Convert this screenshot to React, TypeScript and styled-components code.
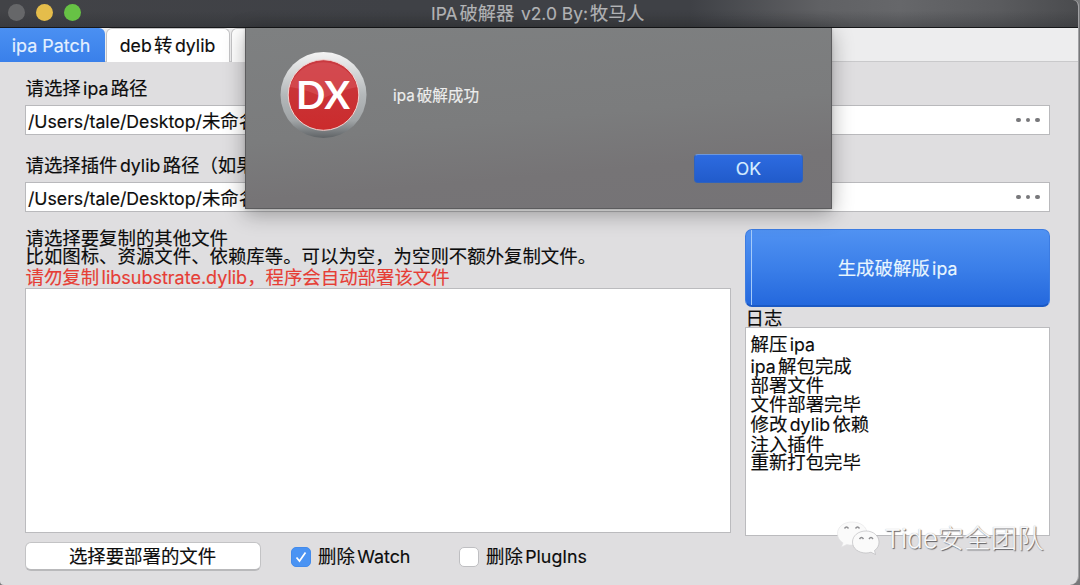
import React from 'react';
import styled, { createGlobalStyle } from 'styled-components';

const Global = createGlobalStyle`
  * { box-sizing: border-box; }
  body { margin: 0; background: #77787a; overflow: hidden; }
`;

const Window = styled.div`
  position: relative;
  width: 1079px;
  height: 585px;
  display: flex;
  flex-direction: column;
  background: #dfdee0;
  border-right: 1px solid #a2a2a5;
  border-radius: 0 6px 9px 4px;
  overflow: hidden;
  font-family: Inter, 'Noto Sans CJK SC', sans-serif;
  font-size: 18.42px;
  color: #0c0c0c;
  white-space: nowrap;
  -webkit-text-stroke: 0.16px currentColor;
`;

const TitleBar = styled.header`
  position: relative;
  flex: none;
  height: 28px;
  display: flex;
  align-items: center;
  gap: 11px;
  padding: 0 0 2px 8px;
  border-bottom: 1px solid #17181a;
  background: linear-gradient(180deg, rgba(40, 42, 45, 0) 40%, rgba(40, 42, 45, 0.35)),
    linear-gradient(90deg, #424347 0, #3f4146 400px, #3f4146 690px, #606164 820px, #66676a 900px, #5a5b5e 1000px, #4a4b4e 1079px);
`;

const Light = styled.i<{ $color: string }>`
  width: 17px;
  height: 17px;
  border-radius: 50%;
  background: ${(p) => p.$color};
`;

const Title = styled.div`
  margin-left: 339px;
  font-size: 18.2px;
  color: #b3b4b6;
  line-height: 26px;
  padding-top: 2px;
`;

const Latin = styled.span<{ $size: number; $l: number; $r: number }>`
  font-size: ${(p) => p.$size}px;
  margin-left: ${(p) => p.$l}px;
  margin-right: ${(p) => p.$r}px;
  white-space: pre;
`;

type MixedProps = { text: string; size?: number; gap?: number };

/* Sets Latin runs slightly apart from the neighbouring Han characters. */
const Mixed = ({ text, size = 17.7, gap = 2.4 }: MixedProps) => {
  const runs = text.split(/([\x20-\x7e]+)/).filter(Boolean);
  return (
    <>
      {runs.map((run, i) =>
        /^[\x20-\x7e]/.test(run) ? (
          <Latin
            key={i}
            $size={size}
            $l={i > 0 ? gap : 0}
            $r={i < runs.length - 1 && !runs[i + 1].startsWith('，') ? gap : 0}
          >
            {run}
          </Latin>
        ) : (
          <React.Fragment key={i}>{run}</React.Fragment>
        ),
      )}
    </>
  );
};

const Tabs = styled.nav`
  flex: none;
  height: 34px;
  display: flex;
  gap: 1px;
  background: #ededee;
  border-bottom: 1px solid #c9c9cb;
`;

const Tab = styled.div<{ $active?: boolean; $width: number }>`
  width: ${(p) => p.$width}px;
  height: 34px;
  line-height: ${(p) => (p.$active ? 35 : 33)}px;
  text-align: center;
  padding-right: ${(p) => (p.$active ? 3 : 1)}px;
  border-radius: ${(p) => (p.$active ? '0 6px 0 0' : '6px 6px 0 0')};
  color: ${(p) => (p.$active ? '#e4f0ff' : '#0c0c0c')};
  background: ${(p) => (p.$active ? 'linear-gradient(#4b90f2, #3a80ea)' : '#fff')};
  border: ${(p) => (p.$active ? '0' : '1px solid #c4c4c6')};
  border-bottom: 0;
`;

const Body = styled.main`
  display: flex;
  flex-direction: column;
  padding: 13px 28px 0 25px;
`;

const Label = styled.div`
  height: 30px;
  line-height: 26px;
  padding-left: 0.5px;
`;

const PathField = styled.div`
  display: flex;
  align-items: center;
  justify-content: space-between;
  height: 30px;
  line-height: 28px;
  padding: 0 9px 0 2px;
  margin-bottom: 17px;
  background: #fff;
  border: 1px solid #b9b9bc;
`;

const PathText = styled.span`
  padding-top: 2px;
`;

const Dots = styled.span`
  display: flex;
  gap: 5px;
  i { width: 4.6px; height: 4.6px; border-radius: 50%; background: #78787b; }
`;

const Columns = styled.div`
  display: grid;
  grid-template-columns: 706px 305px;
  justify-content: space-between;
`;

const Column = styled.section`
  display: flex;
  flex-direction: column;
`;

const Note = styled.div<{ $red?: boolean; $h: number }>`
  height: ${(p) => p.$h}px;
  line-height: ${(p) => p.$h}px;
  padding-left: 0.5px;
  color: ${(p) => (p.$red ? '#e63d35' : '#0c0c0c')};
`;

const FileList = styled.div`
  height: 245px;
  background: #fff;
  border: 1px solid #bbbbbe;
`;

const Actions = styled.div`
  display: flex;
  align-items: center;
  margin-top: 8px;
`;

const PlainButton = styled.button`
  width: 236px;
  height: 29px;
  margin-right: 30px;
  padding: 0 1px 0 0;
  font: inherit;
  line-height: 24px;
  color: #0c0c0c;
  background: #fff;
  border: 1px solid #c3c3c5;
  border-bottom: 2px solid #b9b9bb;
  border-radius: 6px;
`;

const Check = styled.label<{ $width: number }>`
  display: flex;
  align-items: center;
  gap: 7px;
  width: ${(p) => p.$width}px;
  line-height: 28px;
  padding-top: 1px;
`;

const Box = styled.span<{ $on?: boolean }>`
  display: flex;
  align-items: center;
  justify-content: center;
  width: 20px;
  height: 20px;
  border-radius: 5px;
  background: ${(p) => (p.$on ? '#4a93f3' : '#fff')};
  border: 1px solid ${(p) => (p.$on ? '#438bec' : '#bfbfc2')};
`;

const Generate = styled.button`
  height: 78px;
  padding: 0;
  display: flex;
  font: inherit;
  color: #e8f6ff;
  line-height: 76px;
  background: linear-gradient(#5092f2, #3b7fe9 50%, #2468dd);
  border: 1px solid #3c7ce2;
  border-bottom: 2px solid #1b59c4;
  border-radius: 7px;
`;

const Seam = styled.i`
  width: 6px;
  height: 75px;
  border-right: 1px solid #a5cbfa;
`;

const Caption = styled.span`
  flex: 1;
  padding-right: 6px;
`;

const LogLabel = styled.div`
  height: 20px;
  line-height: 22px;
  padding-left: 0.5px;
`;

const Log = styled.div`
  height: 209px;
  padding: 5px 0 0 4.5px;
  background: #fff;
  border: 1px solid #bbbbbe;
`;

const LogLine = styled.div<{ $h: number }>`
  height: ${(p) => p.$h}px;
  line-height: ${(p) => p.$h}px;
`;

const Sheet = styled.div`
  position: absolute;
  left: 245px;
  top: 28px;
  width: 587px;
  height: 181px;
  display: flex;
  flex-direction: column;
  justify-content: space-between;
  padding: 23px 28px 25px 34px;
  background: linear-gradient(175deg, #7e8081 0%, #7b7c7d 50%, #767476 75%, #757376 100%);
  border: 1px solid #5c5c5e;
  border-top: 0;
  box-shadow: 0 5px 20px rgba(0, 0, 0, 0.32), 0 1px 3px rgba(0, 0, 0, 0.15);
`;

const Message = styled.div`
  display: flex;
  align-items: center;
  gap: 25px;
  height: 88px;
  font-size: 15.6px;
  color: #ededed;
`;

const MessageText = styled.span`
  padding-bottom: 3px;
`;

const OkButton = styled.button`
  align-self: flex-end;
  flex: none;
  width: 109px;
  height: 29px;
  padding: 0;
  font: inherit;
  font-size: 17.6px;
  line-height: 28px;
  color: #d6ecff;
  background: linear-gradient(#2d6be0, #215bcb);
  border: 1px solid #2e62bd;
  border-top-color: #6d97dc;
  border-radius: 4px;
`;

const Watermark = styled.div`
  position: absolute;
  left: 836px;
  top: 517px;
  display: flex;
  align-items: center;
  gap: 4.5px;
  height: 42px;
  font-size: 26.5px;
  font-weight: 300;
  color: #f8f8f9;
  text-shadow: 1px 1px 1px #5c5c60, 0 0 1px #a9a9ac;
`;

const WatermarkText = styled.span`
  line-height: 36px;
`;

const Logo = () => (
  <svg width="88" height="88" viewBox="0 0 88 88">
    <defs>
      <linearGradient id="rim" x1="0" y1="0" x2="0" y2="1">
        <stop offset="0" stopColor="#f4f4f4" />
        <stop offset="0.5" stopColor="#b4b8ba" />
        <stop offset="0.8" stopColor="#a0a4a6" />
        <stop offset="1" stopColor="#5f6366" />
      </linearGradient>
      <linearGradient id="disc" x1="0" y1="0" x2="0" y2="1">
        <stop offset="0" stopColor="#c93a40" />
        <stop offset="1" stopColor="#cb2b2c" />
      </linearGradient>
    </defs>
    <circle cx="43.500" cy="44" r="43" fill="url(#rim)" />
    <circle cx="43.500" cy="44" r="35.300" fill="url(#disc)" stroke="#f3d3d0" strokeWidth="1" />
    <path d="M10 36A35 35 0 0 1 77 36Q58 40 44 47Q26 38 10 36Z" fill="#e56a70" opacity="0.350" />
    <text x="43" y="57.500" textAnchor="middle" textLength="54" lengthAdjust="spacingAndGlyphs" fontFamily="Lato" fontWeight="700" fontSize="38" fill="#fff" style={{ WebkitTextStroke: '0.8px #fff' }}>DX</text>
  </svg>
);

const ChatMark = () => (
  <svg width="44" height="38" viewBox="0 0 44 38">
    <g fill="#fafafa" stroke="#b4b4b7" strokeWidth="0.600">
      <path stroke="#e2e2e4" d="M16 3C7.500 3 1.500 8 1.500 14.500C1.500 18.500 3.500 21.500 7 23.800L5.500 28L10.800 25.400C12.500 25.800 14 26 17 26C28 26 31 20 31 14.500C31 8 25 3 16 3Z" />
      <path d="M30 12C22 12 16.500 17 16.500 23C16.500 29.500 22.500 34 30 34C31.700 34 33.400 33.700 35 33.200L39.500 35.500L38.500 31.500C41.500 29.500 43 26.500 43 23C43 17 37.500 12 30 12Z" />
    </g>
    <path d="M8.500 9.500Q10.500 6.500 12.500 9.500M19.500 9.500Q21.500 6.500 23.500 9.500M23.500 20Q25.500 17 27.500 20M33 20Q35 17 37 20" fill="none" stroke="#8e8e91" strokeWidth="1.400" />
  </svg>
);

const logLines = [
  { text: '解压ipa', h: 22 },
  { text: 'ipa解包完成', h: 22 },
  { text: '部署文件', h: 17 },
  { text: '文件部署完毕', h: 20 },
  { text: '修改dylib依赖', h: 21 },
  { text: '注入插件', h: 18 },
  { text: '重新打包完毕', h: 19 },
];

const PathRow = ({ label }: { label: string }) => (
  <>
    <Label><Mixed text={label} /></Label>
    <PathField>
      <PathText><Mixed text="/Users/tale/Desktop/未命名" gap={0} /></PathText>
      <Dots><i /><i /><i /></Dots>
    </PathField>
  </>
);

export default function App() {
  return (
    <>
      <Global />
      <Window>
        <TitleBar>
          <Light $color="#666769" />
          <Light $color="#e5bd4b" />
          <Light $color="#67c245" />
          <Title><Mixed text="IPA破解器 v2.0 By:牧马人" size={17.4} gap={2} /></Title>
        </TitleBar>
        <Tabs>
          <Tab $active $width={105}><Mixed text="ipa Patch" size={17.9} /></Tab>
          <Tab $width={124}><Mixed text="deb转dylib" /></Tab>
          <Tab $width={100} />
        </Tabs>
        <Body>
          <PathRow label="请选择ipa路径" />
          <PathRow label="请选择插件dylib路径（如果" />
          <Columns>
            <Column>
              <Note $h={18}>请选择要复制的其他文件</Note>
              <Note $h={19}>比如图标、资源文件、依赖库等。可以为空，为空则不额外复制文件。</Note>
              <Note $h={22} $red><Mixed text="请勿复制libsubstrate.dylib，程序会自动部署该文件" size={18} /></Note>
              <FileList />
              <Actions>
                <PlainButton>选择要部署的文件</PlainButton>
                <Check $width={168}>
                  <Box $on>
                    <svg width="14" height="14" viewBox="0 0 14 14">
                      <path d="M2.500 7.500L5.500 11L11.500 2.500" fill="none" stroke="#fff" strokeWidth="1.700" />
                    </svg>
                  </Box>
                  <span><Mixed text="删除Watch" size={17.9} /></span>
                </Check>
                <Check $width={140}>
                  <Box />
                  <span><Mixed text="删除PlugIns" size={17.8} /></span>
                </Check>
              </Actions>
            </Column>
            <Column>
              <Generate><Seam /><Caption><Mixed text="生成破解版ipa" /></Caption></Generate>
              <LogLabel>日志</LogLabel>
              <Log>
                {logLines.map((l) => (
                  <LogLine key={l.text} $h={l.h}><Mixed text={l.text} /></LogLine>
                ))}
              </Log>
            </Column>
          </Columns>
        </Body>
        <Sheet>
          <Message>
            <Logo />
            <MessageText><Mixed text="ipa破解成功" size={15.2} gap={2} /></MessageText>
          </Message>
          <OkButton>OK</OkButton>
        </Sheet>
        <Watermark>
          <ChatMark />
          <WatermarkText><Mixed text="Tide安全团队" size={26} gap={0} /></WatermarkText>
        </Watermark>
      </Window>
    </>
  );
}
